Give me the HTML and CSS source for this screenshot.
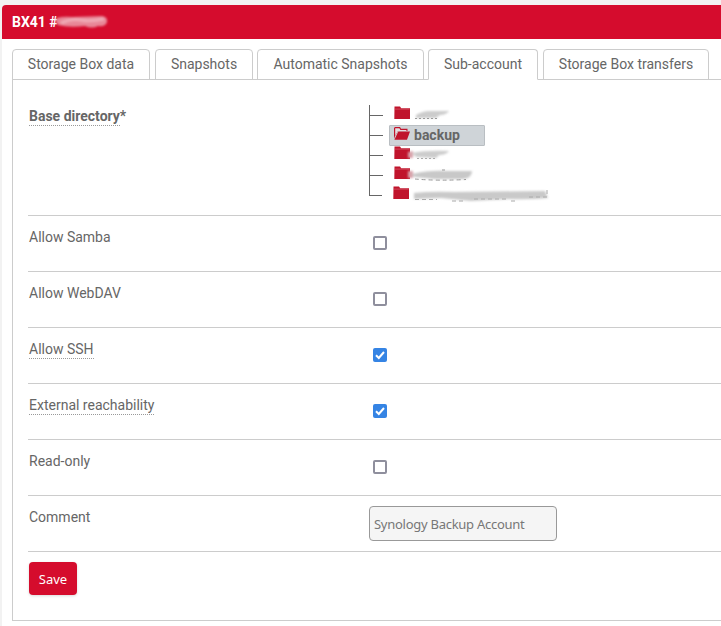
FILE: index.html
```html
<!DOCTYPE html>
<html lang="en">
<head>
<meta charset="utf-8">
<title>Storage Box</title>
<link rel="stylesheet" href="styles.css">
</head>
<body>
<svg width="0" height="0" class="defs" aria-hidden="true">
  <defs>
    <filter id="soft" x="-20%" y="-50%" width="140%" height="200%"><feGaussianBlur stdDeviation="1"/></filter>
    <symbol id="folder" viewBox="0 0 16 14"><path fill="#c0142c" d="M.5.5H6l1.2 1.7H16V13H.3z"/><path stroke="#d5606f" stroke-width=".7" d="M1 3.1h14.5"/></symbol>
    <symbol id="folder-open" viewBox="0 0 16 14"><path fill="#c0142c" d="M0 1 1 0h5l1 1.8h6.5V4H4L1 9 0 12z"/><path fill="#e5dde0" d="M1.2 1.2h4.2l1 1.8h6V4H4L1.2 8.5z"/><path fill="#c0142c" d="M4.3 4.6H16L13 12.7H.4z"/></symbol>
  </defs>
</svg>
<main class="card">
  <header class="card-header"><span>BX41 #</span>
    <svg class="mask-id" width="54" height="16" viewBox="0 0 54 16"><g filter="url(#soft)"><path fill="#e88797" d="M1 4Q8 2 16 3L46 2Q52 3 51 8Q50 13 42 12Q36 15 29 12Q13 14 2 11Q-2 7 1 4z"/><path fill="none" stroke="#efabb6" stroke-width="3" d="M5 9Q16 4 25 6T48 5"/></g></svg>
  </header>
  <nav class="tabs">
    <a class="tab t1"><span>Storage Box data</span></a>
    <a class="tab t2"><span>Snapshots</span></a>
    <a class="tab t3"><span>Automatic Snapshots</span></a>
    <a class="tab t4 active"><span>Sub-account</span></a>
    <a class="tab t5"><span>Storage Box transfers</span></a>
  </nav>
  <section class="panel">
    <div class="row row-tree">
      <div class="label strong"><span class="hint">Base directory</span>*</div>
      <ul class="tree">
        <li><svg class="folder" width="16" height="14"><use href="#folder"/></svg><svg class="smudge" width="60" height="16" viewBox="0 0 60 16"><g filter="url(#soft)"><path fill="#ccc" d="M4 8Q11 4 17 4L37 4Q34 8 28 8L24 11 4 11z"/></g><path fill="none" stroke="#999" stroke-dasharray="2 2" d="M3 11.5H27"/></svg></li>
        <li class="selected"><span class="pick"><svg class="folder" width="16" height="14"><use href="#folder-open"/></svg><b>backup</b></span></li>
        <li><svg class="folder" width="16" height="14"><use href="#folder"/></svg><svg class="smudge" width="60" height="16" viewBox="0 0 60 16"><g filter="url(#soft)"><path fill="#d9a2aa" d="M-4 5L1 4V11H-4z"/><path fill="#ccc" d="M0 6Q14 3 37 4Q34 8 27 8L24 11 4 10z"/></g><path fill="none" stroke="#aaa" stroke-dasharray="2 2" d="M5 11.5H25"/></svg></li>
        <li><svg class="folder" width="16" height="14"><use href="#folder"/></svg><svg class="smudge" width="70" height="16" viewBox="0 0 70 16"><g filter="url(#soft)"><path fill="#d9a2aa" d="M-4 4L1 4V11H-4z"/><path fill="#c8c8c8" d="M0 7Q18 3 34 4L60 4Q60 11 51 12L23 12 2 10z"/></g><path fill="none" stroke="#999" stroke-dasharray="4 3" d="M3 12Q25 14 54 12.5M30 3h3"/></svg></li>
        <li class="last"><svg class="folder" width="16" height="14"><use href="#folder"/></svg><svg class="smudge" width="142" height="20" viewBox="0 0 142 20"><g filter="url(#soft)"><path fill="#c9c9c9" d="M3 6Q20 4 44 5L134 4 137 11Q115 13 98 12L60 14 30 11 3 12z"/></g><path fill="none" stroke="#aaa" stroke-dasharray="4 3" d="M4 12.5H26M41 14H54M63 12H95M100 14h5M118 10h18V3"/></svg></li>
      </ul>
    </div>
    <div class="row"><div class="label">Allow Samba</div><span class="check"></span></div>
    <div class="row"><div class="label">Allow WebDAV</div><span class="check"></span></div>
    <div class="row"><div class="label"><span class="hint">Allow SSH</span></div><span class="check on"><svg width="14" height="14" viewBox="0 0 14 14"><path d="M3 7.3 5.8 10 11 4"/></svg></span></div>
    <div class="row"><div class="label"><span class="hint">External reachability</span></div><span class="check on"><svg width="14" height="14" viewBox="0 0 14 14"><path d="M3 7.3 5.8 10 11 4"/></svg></span></div>
    <div class="row"><div class="label">Read-only</div><span class="check"></span></div>
    <div class="row"><div class="label">Comment</div><input class="field" type="text" value="Synology Backup Account"></div>
    <button class="save" type="button">Save</button>
  </section>
</main>
</body>
</html>
```

FILE: styles.css
```css
* { box-sizing: border-box; }
html, body { height: 626px; overflow: hidden; }
body {
  margin: 0;
  padding: 5px 0 0 2px;
  background: #f2f2f2;
  color: #666;
  font: 14px/20px Roboto, "Liberation Sans", sans-serif;
}
.defs { position: absolute; }
.card { height: 621px; background: #fff; border-radius: 4px 0 0 0; overflow: hidden; }
.card-header {
  display: flex;
  align-items: center;
  height: 34px;
  padding-left: 10px;
  background: #d50c2d;
  color: #fff;
  font-weight: 700;
}
.mask-id { overflow: visible; margin-left: -2px; }
.tabs { display: flex; height: 41px; padding: 10px 0 0 10px; }
.tab {
  height: 31px;
  border: 1px solid #ccc;
  border-radius: 4px 4px 0 0;
  text-align: center;
  line-height: 29px;
  white-space: nowrap;
}
.tab.active { background: #fff; border-bottom-color: #fff; position: relative; z-index: 1; }
.t1 { width: 138px; margin-right: 5px; }
.t2 { width: 98px; margin-right: 4px; }
.t3 { width: 167px; margin-right: 4px; }
.t4 { width: 110px; margin-right: 5px; }
.t5 { width: 166px; }
.panel {
  height: 542px;
  margin: -1px 0 0 10px;
  padding-left: 15px;
  border: 1px solid #ccc;
  border-right: 0;
}
.row {
  display: grid;
  grid-template-columns: 341px 1fr;
  align-items: start;
  height: 56px;
  border-bottom: 1px solid #ccc;
}
.row-tree { height: 136px; }
.label { padding: 11px 0 0 1px; }
.row-tree .label { padding-top: 26px; }
.strong { font-weight: 700; }
.hint { display: inline-block; height: 20px; border-bottom: 1px dotted #999; }
.tree {
  width: 200px;
  margin: 25px 0 0;
  padding: 0;
  list-style: none;
}
.tree li {
  display: flex;
  height: 20px;
  padding-left: 11px;
  border-left: 1px solid #666;
}
.tree li::before {
  content: "";
  flex: none;
  width: 13px;
  height: 1px;
  margin: 10px 0 0 -11px;
  background: #666;
}
.tree li.last { height: 11px; }
.tree li.last::before { width: 12px; }
.folder { flex: none; margin: 1px 0 0 11px; }
.smudge { flex: none; overflow: visible; margin: 2px 0 0 2px; }
.pick {
  display: flex;
  width: 96px;
  height: 21px;
  margin-left: 6px;
  border: 1px solid #b9bec2;
  border-radius: 1px;
  background: #cfd4d8;
  line-height: 19px;
}
.pick .folder { margin: 1px 4px 0; }
.check {
  width: 14px;
  height: 14px;
  margin: 20.4px 0 0 4px;
  border: 2px solid #8f8f9d;
  border-radius: 2px;
}
.check.on { border: 0; background: #3584e4; }
.check svg { display: block; fill: none; stroke: #fff; stroke-width: 2; }
.field {
  width: 188px;
  height: 35px;
  margin-top: 10px;
  padding: 1px 4px;
  border: 1px solid #999;
  border-radius: 4px;
  background: #f5f5f5;
  color: #777;
  font: 13px "Noto Sans", sans-serif;
  letter-spacing: -.27px;
}
.save {
  display: block;
  width: 48px;
  height: 33px;
  margin: 10px 0 0 1px;
  padding: 0;
  border: 0;
  border-radius: 4px;
  background: #d50c2d;
  box-shadow: 0 1px 3px rgba(0, 0, 0, .15);
  color: #fff;
  font: 13px "Noto Sans", sans-serif;
}
```
